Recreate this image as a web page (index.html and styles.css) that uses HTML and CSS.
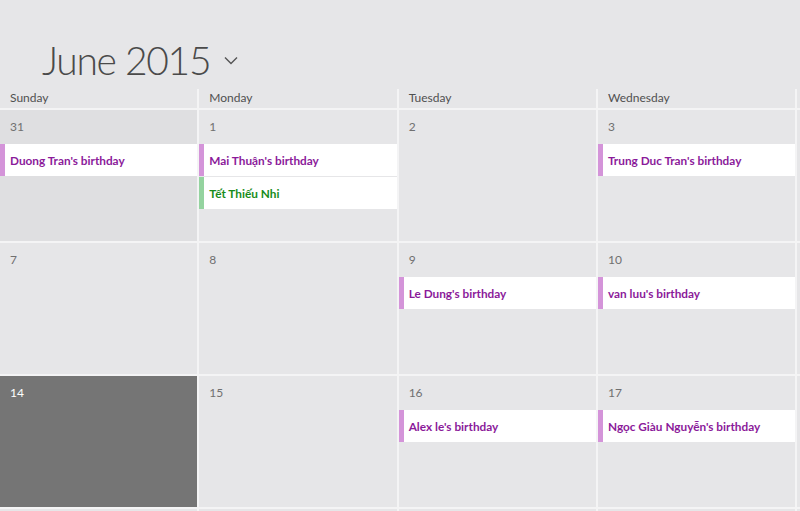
FILE: index.html
```html
<!DOCTYPE html>
<html>
<head>
<meta charset="utf-8">
<link rel="stylesheet" href="styles.css">
</head>
<body>
<div class="app">
  <header class="title">
    <h1>June 2015</h1>
    <svg class="chev" width="14" height="9" viewBox="0 0 14 9"><polyline points="1,1.5 7,7.5 13,1.5" fill="none" stroke="#555" stroke-width="1.4"/></svg>
  </header>
  <div class="grid">
    <div class="dow">Sunday</div>
    <div class="dow">Monday</div>
    <div class="dow">Tuesday</div>
    <div class="dow">Wednesday</div>
    <div class="dow"></div>

    <div class="day other"><span class="num">31</span>
      <div class="events"><div class="ev bday">Duong Tran's birthday</div></div>
    </div>
    <div class="day"><span class="num">1</span>
      <div class="events"><div class="ev bday">Mai Thuận's birthday</div><div class="ev hol">Tết Thiếu Nhi</div></div>
    </div>
    <div class="day"><span class="num">2</span></div>
    <div class="day"><span class="num">3</span>
      <div class="events"><div class="ev bday">Trung Duc Tran's birthday</div></div>
    </div>
    <div class="day"></div>

    <div class="day"><span class="num">7</span></div>
    <div class="day"><span class="num">8</span></div>
    <div class="day"><span class="num">9</span>
      <div class="events"><div class="ev bday">Le Dung's birthday</div></div>
    </div>
    <div class="day"><span class="num">10</span>
      <div class="events"><div class="ev bday">van luu's birthday</div></div>
    </div>
    <div class="day"></div>

    <div class="day today"><span class="num">14</span></div>
    <div class="day"><span class="num">15</span></div>
    <div class="day"><span class="num">16</span>
      <div class="events"><div class="ev bday">Alex le's birthday</div></div>
    </div>
    <div class="day"><span class="num">17</span>
      <div class="events"><div class="ev bday">Ngọc Giàu Nguyễn's birthday</div></div>
    </div>
    <div class="day"></div>

    <div class="day"></div>
    <div class="day"></div>
    <div class="day"></div>
    <div class="day"></div>
    <div class="day"></div>
  </div>
</div>
</body>
</html>
```

FILE: styles.css
```css
html, body {
  margin: 0;
  padding: 0;
  background: #e6e6e8;
  font-family: Lato, "Open Sans", sans-serif;
}
.app {
  width: 800px;
  height: 511px;
  overflow: hidden;
}
.title {
  height: 89px;
  display: flex;
  align-items: flex-start;
  padding-left: 42px;
  box-sizing: border-box;
}
.title h1 {
  margin: 0;
  margin-top: 34px;
  font-weight: 300;
  font-size: 39px;
  line-height: 52px;
  color: #4a4a4a;
  letter-spacing: -1.3px;
}
.chev {
  margin-top: 56px;
  margin-left: 14px;
}
.grid {
  display: grid;
  grid-template-columns: repeat(5, 197.33px);
  grid-template-rows: 19px repeat(4, 131px);
  gap: 2px;
  background: #f4f4f5;
  width: max-content;
}
.dow {
  background: #e6e6e8;
  font-size: 12px;
  color: #505050;
  padding-left: 10px;
  line-height: 18px;
}
.day {
  background: #e6e6e8;
  display: flex;
  flex-direction: column;
}
.day.other {
  background: #dfdfe1;
}
.day.today {
  background: #757575;
}
.num {
  font-size: 12px;
  color: #707070;
  padding: 9px 0 0 10px;
  line-height: 16px;
}
.today .num {
  color: #ffffff;
}
.events {
  margin-top: 9px;
  display: flex;
  flex-direction: column;
  gap: 1px;
}
.ev {
  background: #ffffff;
  height: 32px;
  line-height: 34px;
  padding-left: 5px;
  border-left: 5px solid #d494d9;
  font-size: 11.8px;
  font-weight: 700;
  color: #8b1a9a;
  white-space: nowrap;
}
.ev.hol {
  border-left-color: #94d39f;
  color: #178c1a;
}
```
